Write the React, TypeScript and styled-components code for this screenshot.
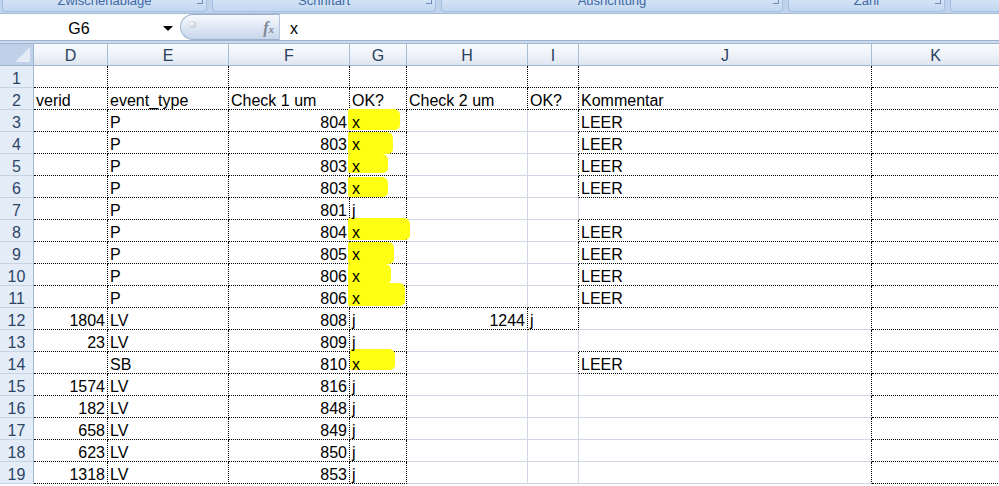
import React from 'react';
import styled, { createGlobalStyle } from 'styled-components';

type Col = 'D' | 'E' | 'F' | 'G' | 'H' | 'I' | 'J' | 'K';

const COLS: { key: Col; width: number }[] = [
  { key: 'D', width: 74 },
  { key: 'E', width: 121 },
  { key: 'F', width: 121 },
  { key: 'G', width: 57 },
  { key: 'H', width: 121 },
  { key: 'I', width: 51 },
  { key: 'J', width: 293 },
  { key: 'K', width: 128 },
];

type Mark = { left: number; width: number; top: number; height: number };

type Row = Partial<Record<Col, string | number>> & { mark?: Mark };

const ROWS: Row[] = [
  {},
  { D: 'verid', E: 'event_type', F: 'Check 1 um', G: 'OK?', H: 'Check 2 um', I: 'OK?', J: 'Kommentar' },
  { E: 'P', F: 804, G: 'x', J: 'LEER', mark: { left: -2, width: 52, top: -1, height: 21 } },
  { E: 'P', F: 803, G: 'x', J: 'LEER', mark: { left: -2, width: 45, top: 0, height: 22 } },
  { E: 'P', F: 803, G: 'x', J: 'LEER', mark: { left: -2, width: 40, top: 0, height: 19 } },
  { E: 'P', F: 803, G: 'x', J: 'LEER', mark: { left: -2, width: 40, top: 1, height: 20 } },
  { E: 'P', F: 801, G: 'j' },
  { E: 'P', F: 804, G: 'x', J: 'LEER', mark: { left: -2, width: 62, top: -2, height: 22 } },
  { E: 'P', F: 805, G: 'x', J: 'LEER', mark: { left: -2, width: 46, top: 0, height: 22 } },
  { E: 'P', F: 806, G: 'x', J: 'LEER', mark: { left: -2, width: 43, top: 0, height: 20 } },
  { E: 'P', F: 806, G: 'x', J: 'LEER', mark: { left: -2, width: 57, top: -3, height: 23 } },
  { D: 1804, E: 'LV', F: 808, G: 'j', H: 1244, I: 'j' },
  { D: 23, E: 'LV', F: 809, G: 'j' },
  { E: 'SB', F: 810, G: 'x', J: 'LEER', mark: { left: 0, width: 45, top: -3, height: 21 } },
  { D: 1574, E: 'LV', F: 816, G: 'j' },
  { D: 182, E: 'LV', F: 848, G: 'j' },
  { D: 658, E: 'LV', F: 849, G: 'j' },
  { D: 623, E: 'LV', F: 850, G: 'j' },
  { D: 1318, E: 'LV', F: 853, G: 'j' },
];

const RIBBON_GROUPS = [
  { label: 'Zwischenablage', width: 203 },
  { label: 'Schriftart', width: 222 },
  { label: 'Ausrichtung', width: 340 },
  { label: 'Zahl', width: 155 },
  { label: '', width: 80 },
];

// cells that carry a dotted border of their own
function framed(col: Col, row: number): boolean {
  if (row < 1 || row > ROWS.length) return false;
  if ('DEFGK'.includes(col)) return true;
  if (col === 'H' || col === 'I') return row <= 2 || row === 12;
  if (col === 'J') return row <= 6 || (row >= 8 && row <= 11) || row === 14;
  return false;
}

function nextCol(col: Col): Col | null {
  const i = COLS.findIndex((c) => c.key === col);
  return i < COLS.length - 1 ? COLS[i + 1].key : null;
}

const GlobalStyle = createGlobalStyle`
  html, body {
    margin: 0;
    padding: 0;
    background: #ffffff;
    overflow: hidden;
  }
  body {
    font-family: "Liberation Sans", Arial, sans-serif;
  }
`;

export default function App() {
  const cols = `34px ${COLS.map((c) => `${c.width}px`).join(' ')}`;
  return (
    <>
      <GlobalStyle />
      <Window>
        <Ribbon>
          {RIBBON_GROUPS.map((g, i) => (
            <RibbonGroup key={i} $width={g.width}>
              <GroupLabel>{g.label}</GroupLabel>
              {g.label && <Launcher />}
            </RibbonGroup>
          ))}
        </Ribbon>
        <FormulaBar>
          <NameBox>
            <NameText>G6</NameText>
            <DropArrow />
          </NameBox>
          <FxPill>
            <PillKnob />
            <FxGlyph>
              f<small>x</small>
            </FxGlyph>
          </FxPill>
          <FormulaInput>x</FormulaInput>
        </FormulaBar>
        <BarGap />
        <Sheet $cols={cols}>
          <Corner>
            <CornerTriangle />
          </Corner>
          {COLS.map((c) => (
            <ColHeader key={c.key}>{c.key}</ColHeader>
          ))}
          {ROWS.map((row, ri) => {
            const r = ri + 1;
            return (
              <React.Fragment key={r}>
                <RowHeader>{r}</RowHeader>
                {COLS.map((c) => {
                  const v = row[c.key];
                  const nc = nextCol(c.key);
                  const dotRight = framed(c.key, r) || (nc !== null && framed(nc, r));
                  const dotBottom = framed(c.key, r) || framed(c.key, r + 1);
                  const mark = c.key === 'G' ? row.mark : undefined;
                  return (
                    <Cell
                      key={c.key}
                      $dotRight={dotRight}
                      $dotBottom={dotBottom}
                      $numeric={typeof v === 'number'}
                    >
                      {mark && (
                        <Marker
                          style={{
                            left: mark.left,
                            width: mark.width,
                            top: mark.top,
                            height: mark.height,
                          }}
                        />
                      )}
                      {v !== undefined && <CellText>{v}</CellText>}
                    </Cell>
                  );
                })}
              </React.Fragment>
            );
          })}
        </Sheet>
      </Window>
    </>
  );
}

const Window = styled.div`
  width: 999px;
  height: 486px;
  overflow: hidden;
  display: flex;
  flex-direction: column;
  background: #ffffff;
`;

const Ribbon = styled.div`
  height: 13px;
  flex: none;
  display: flex;
  gap: 5px;
  padding-left: 2px;
  background: #bfd3ec;
  overflow: hidden;
  border-bottom: 1px solid #a3bad6;
`;

const RibbonGroup = styled.div<{ $width: number }>`
  position: relative;
  flex: none;
  width: ${(p) => p.$width}px;
  height: 11px;
  border: 1px solid #a6bfe0;
  border-top: none;
  border-radius: 0 0 4px 4px;
  background: linear-gradient(#d4e3f5, #c2d7f1);
  display: flex;
  justify-content: center;
  overflow: hidden;
`;

const GroupLabel = styled.span`
  margin-top: -7px;
  font-family: "Liberation Sans", Arial, sans-serif;
  font-size: 13px;
  line-height: 16px;
  color: #3f68a3;
  white-space: nowrap;
`;

const Launcher = styled.span`
  position: absolute;
  right: 3px;
  top: 0;
  width: 5px;
  height: 3px;
  border-right: 1px solid #6f8db8;
  border-bottom: 1px solid #6f8db8;
`;

const FormulaBar = styled.div`
  height: 26px;
  flex: none;
  display: flex;
  background: #ffffff;
  border-bottom: 1px solid #9bb1cc;
`;

const NameBox = styled.div`
  width: 180px;
  flex: none;
  display: flex;
  align-items: center;
  padding-top: 3px;
  box-sizing: border-box;
`;

const NameText = styled.span`
  width: 158px;
  text-align: center;
  font-size: 16px;
  color: #000;
`;

const DropArrow = styled.span`
  width: 0;
  height: 0;
  margin-left: 5px;
  border-left: 5px solid transparent;
  border-right: 5px solid transparent;
  border-top: 5px solid #000;
`;

const FxPill = styled.div`
  width: 100px;
  flex: none;
  height: 26px;
  border-radius: 13px 0 0 13px;
  border: 1px solid #9fb3cf;
  border-right: 1px solid #b5c5da;
  background: linear-gradient(#f7f9fd 0%, #dfe8f5 50%, #c7d6eb 100%);
  display: flex;
  align-items: center;
  justify-content: space-between;
  padding: 1px 5px 0 8px;
  box-sizing: border-box;
`;

const PillKnob = styled.span`
  width: 7px;
  height: 7px;
  border-radius: 50%;
  margin-top: -6px;
  background: radial-gradient(circle at 40% 40%, #ffffff, #c3c9d1 70%);
`;

const FxGlyph = styled.span`
  font-family: "Liberation Serif", "Times New Roman", serif;
  font-style: italic;
  font-weight: bold;
  font-size: 16px;
  color: #7d8794;
  small {
    font-size: 11px;
  }
`;

const FormulaInput = styled.div`
  flex: 1;
  display: flex;
  align-items: center;
  padding: 3px 0 0 10px;
  font-size: 16px;
  color: #000;
`;

const BarGap = styled.div`
  height: 2px;
  flex: none;
  background: #cbdaee;
  border-bottom: 1px solid #9eb6ce;
`;

const Sheet = styled.div<{ $cols: string }>`
  display: grid;
  grid-template-columns: ${(p) => p.$cols};
  grid-auto-rows: 22px;
  grid-template-rows: 22px;
  font-family: "Liberation Sans", Arial, sans-serif;
  font-size: 16px;
`;

const Corner = styled.div`
  position: relative;
  background: #bfd1e8;
  border-right: 1px solid #9eb6ce;
  border-bottom: 1px solid #9eb6ce;
`;

const CornerTriangle = styled.span`
  position: absolute;
  right: 3px;
  bottom: 3px;
  width: 0;
  height: 0;
  border-left: 15px solid transparent;
  border-bottom: 15px solid #e3ebf5;
`;

const ColHeader = styled.div`
  display: flex;
  align-items: center;
  justify-content: center;
  padding-top: 3px;
  background: linear-gradient(#f9fbfd 0%, #eef2f8 55%, #dde5f0 100%);
  border-right: 1px solid #a7bbd2;
  border-bottom: 1px solid #9eb6ce;
  color: #27405e;
  font-size: 16px;
  line-height: 1;
`;

const RowHeader = styled.div`
  display: flex;
  align-items: center;
  justify-content: center;
  padding-top: 4px;
  background: #e4ecf7;
  border-right: 1px solid #9eb6ce;
  border-bottom: 1px solid #c5d3e5;
  color: #2c4566;
  font-size: 16px;
  line-height: 1;
`;

const Cell = styled.div<{ $dotRight: boolean; $dotBottom: boolean; $numeric: boolean }>`
  position: relative;
  min-width: 0;
  display: flex;
  align-items: center;
  justify-content: ${(p) => (p.$numeric ? 'flex-end' : 'flex-start')};
  padding: 4px ${(p) => (p.$numeric ? '2px' : '0')} 0 ${(p) => (p.$numeric ? '0' : '2px')};
  border-right: 1px ${(p) => (p.$dotRight ? 'dotted #000' : 'solid #d0d7e5')};
  border-bottom: 1px ${(p) => (p.$dotBottom ? 'dotted #000' : 'solid #d0d7e5')};
  white-space: nowrap;
  color: #000;
`;

const CellText = styled.span`
  position: relative;
  z-index: 1;
  line-height: 1;
`;

const Marker = styled.span`
  position: absolute;
  z-index: 0;
  background: #ffff14;
  border-radius: 2px 6px 5px 2px;
`;
